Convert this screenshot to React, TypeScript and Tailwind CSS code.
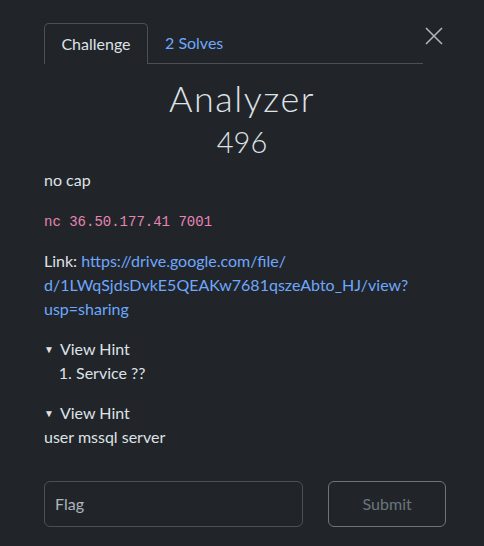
const App = () => {
  return (
    <div className="w-[484px] h-[546px] bg-[#212529] text-[#dee2e6] font-['Lato','Noto_Sans',sans-serif] overflow-hidden">
      <div className="flex items-start pt-[23px] pl-[44px] pr-[40px]">
        <div className="flex-1 flex border-b border-[#495057] h-[41px]">
          <div className="h-[41px] w-[104px] -mb-px flex items-center justify-center border border-b-0 border-[#495057] rounded-t-[5px] bg-[#212529] text-[16px] text-[#dee2e6]">
            Challenge
          </div>
          <div className="h-[40px] flex items-center pl-[17px] text-[16px] text-[#6ea8fe]">2 Solves</div>
        </div>
        <button className="w-[20px] h-[20px] mt-[3px] ml-[1px] flex items-center justify-center text-[#adb5bd]">
          <svg width="18" height="18" viewBox="0 0 18 18" fill="none" stroke="currentColor" strokeWidth="1.6">
            <path d="M1 1 L17 17 M17 1 L1 17" />
          </svg>
        </button>
      </div>

      <div className="flex flex-col items-center mt-[12px]">
        <h2 className="text-[36px] leading-[44px] tracking-[1.5px] font-light">Analyzer</h2>
        <h3 className="text-[29px] leading-[36px] font-light mt-[4px]">496</h3>
      </div>

      <div className="px-[44px] text-[16px] leading-[24px] mt-[8px]">
        <p>no cap</p>
        <p className="mt-[18px] font-['Liberation_Mono',monospace] text-[14px] text-[#e685b5]">nc 36.50.177.41 7001</p>
        <p className="mt-[15px]">
          Link:{" "}
          <a className="text-[#6ea8fe]">
            https://drive.google.com/file/
            <br />
            d/1LWqSjdsDvkE5QEAKw7681qszeAbto_HJ/view?
            <br />
            usp=sharing
          </a>
        </p>

        <div className="mt-[16px]">
          <div className="flex items-center">
            <span className="text-[10px] mr-[6px]">▼</span>View Hint
          </div>
          <ol className="list-decimal pl-[32px]">
            <li>Service ??</li>
          </ol>
        </div>

        <div className="mt-[16px]">
          <div className="flex items-center">
            <span className="text-[10px] mr-[6px]">▼</span>View Hint
          </div>
          <p>user mssql server</p>
        </div>

        <div className="flex mt-[32px] gap-[25px] w-[402px]">
          <div className="w-[260px] h-[46px] border border-[#495057] rounded-[6px] flex items-center pl-[10px] text-[#adb5bd]">
            Flag
          </div>
          <button className="w-[118px] h-[46px] border border-[#6c757d] rounded-[6px] text-[#6c757d]">Submit</button>
        </div>
      </div>
    </div>
  )
}

export default App
